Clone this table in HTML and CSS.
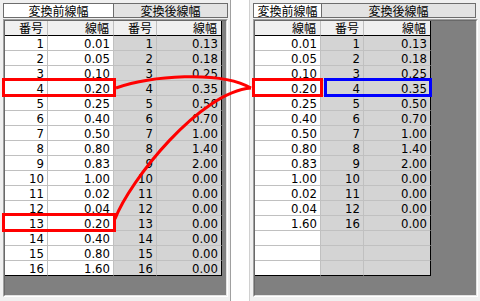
FILE: index.html
```html
<!DOCTYPE html>
<html lang="ja">
<head>
<meta charset="utf-8">
<link rel="stylesheet" href="styles.css">
</head>
<body>
<div class="screen">
  <div class="panel">
    <div class="tabs">
      <div class="tab active tab-l1">変換前線幅</div>
      <div class="tab tab-l2">変換後線幅</div>
    </div>
    <div class="frame">
      <div class="well">
        <div class="grid grid-left">
          <div class="cell head">番号</div><div class="cell head">線幅</div><div class="cell head">番号</div><div class="cell head last">線幅</div>
          <div class="cell">1</div><div class="cell">0.01</div><div class="cell g">1</div><div class="cell g last">0.13</div>
          <div class="cell">2</div><div class="cell">0.05</div><div class="cell g">2</div><div class="cell g last">0.18</div>
          <div class="cell">3</div><div class="cell">0.10</div><div class="cell g">3</div><div class="cell g last">0.25</div>
          <div class="cell">4</div><div class="cell">0.20</div><div class="cell g">4</div><div class="cell g last">0.35</div>
          <div class="cell">5</div><div class="cell">0.25</div><div class="cell g">5</div><div class="cell g last">0.50</div>
          <div class="cell">6</div><div class="cell">0.40</div><div class="cell g">6</div><div class="cell g last">0.70</div>
          <div class="cell">7</div><div class="cell">0.50</div><div class="cell g">7</div><div class="cell g last">1.00</div>
          <div class="cell">8</div><div class="cell">0.80</div><div class="cell g">8</div><div class="cell g last">1.40</div>
          <div class="cell">9</div><div class="cell">0.83</div><div class="cell g">9</div><div class="cell g last">2.00</div>
          <div class="cell">10</div><div class="cell">1.00</div><div class="cell g">10</div><div class="cell g last">0.00</div>
          <div class="cell">11</div><div class="cell">0.02</div><div class="cell g">11</div><div class="cell g last">0.00</div>
          <div class="cell">12</div><div class="cell">0.04</div><div class="cell g">12</div><div class="cell g last">0.00</div>
          <div class="cell">13</div><div class="cell">0.20</div><div class="cell g">13</div><div class="cell g last">0.00</div>
          <div class="cell">14</div><div class="cell">0.40</div><div class="cell g">14</div><div class="cell g last">0.00</div>
          <div class="cell">15</div><div class="cell">0.80</div><div class="cell g">15</div><div class="cell g last">0.00</div>
          <div class="cell bottom">16</div><div class="cell bottom">1.60</div><div class="cell g bottom">16</div><div class="cell g last bottom">0.00</div>
        </div>
      </div>
    </div>
  </div>
  <div class="divider"></div>
  <div class="panel">
    <div class="tabs">
      <div class="tab active tab-r1">変換前線幅</div>
      <div class="tab tab-r2">変換後線幅</div>
    </div>
    <div class="frame">
      <div class="well">
        <div class="grid grid-right">
          <div class="cell head">線幅</div><div class="cell head">番号</div><div class="cell head last">線幅</div>
          <div class="cell">0.01</div><div class="cell g">1</div><div class="cell g last">0.13</div>
          <div class="cell">0.05</div><div class="cell g">2</div><div class="cell g last">0.18</div>
          <div class="cell">0.10</div><div class="cell g">3</div><div class="cell g last">0.25</div>
          <div class="cell">0.20</div><div class="cell g">4</div><div class="cell g last">0.35</div>
          <div class="cell">0.25</div><div class="cell g">5</div><div class="cell g last">0.50</div>
          <div class="cell">0.40</div><div class="cell g">6</div><div class="cell g last">0.70</div>
          <div class="cell">0.50</div><div class="cell g">7</div><div class="cell g last">1.00</div>
          <div class="cell">0.80</div><div class="cell g">8</div><div class="cell g last">1.40</div>
          <div class="cell">0.83</div><div class="cell g">9</div><div class="cell g last">2.00</div>
          <div class="cell">1.00</div><div class="cell g">10</div><div class="cell g last">0.00</div>
          <div class="cell">0.02</div><div class="cell g">11</div><div class="cell g last">0.00</div>
          <div class="cell">0.04</div><div class="cell g">12</div><div class="cell g last">0.00</div>
          <div class="cell">1.60</div><div class="cell g">16</div><div class="cell g last">0.00</div>
          <div class="cell"></div><div class="cell g"></div><div class="cell g last"></div>
          <div class="cell"></div><div class="cell g"></div><div class="cell g last"></div>
          <div class="cell bottom"></div><div class="cell g bottom"></div><div class="cell g last bottom"></div>
        </div>
      </div>
    </div>
  </div>
  <svg class="overlay" width="480" height="301" viewBox="0 0 480 301">
    <g fill="none" stroke="#ff0000" stroke-width="3">
      <rect x="3.5" y="79.5" width="111" height="16"/>
      <rect x="3.5" y="214.5" width="111" height="16"/>
      <rect x="253.5" y="79.5" width="68" height="16"/>
      <path d="M116,88 C150,76 220,70 251,88"/>
      <path d="M115,219 C130,180 200,92 251,88"/>
    </g>
    <rect x="325.5" y="79.5" width="105" height="16" fill="none" stroke="#0000ff" stroke-width="3"/>
  </svg>
</div>
</body>
</html>
```

FILE: styles.css
```css
html, body {
  margin: 0;
  padding: 0;
}
body {
  width: 480px;
  height: 301px;
  overflow: hidden;
  background: #f0f0f0;
  font-family: "Liberation Sans Narrow", "DejaVu Sans Condensed", "Liberation Sans", "Noto Sans CJK JP", sans-serif;
  font-size: 13px;
  color: #000;
}
.screen {
  position: relative;
  display: flex;
  width: 480px;
  height: 301px;
}
.panel {
  width: 230px;
  height: 301px;
  padding: 3px 0 0 3px;
  box-sizing: border-box;
  background: #f0f0f0;
}
.divider {
  width: 20px;
  height: 301px;
  box-sizing: border-box;
  background: #ffffff;
  border-left: 1px solid #a0a0a0;
  border-right: 1px solid #d0d0d0;
}
.tabs {
  display: flex;
  height: 15px;
  margin-bottom: 1px;
}
.tab {
  box-sizing: border-box;
  height: 15px;
  border: 1px solid #6d6d6d;
  background: #e3e3e3;
  font-family: "Noto Sans CJK JP", sans-serif;
  font-size: 12px;
  line-height: 13px;
  text-align: center;
  white-space: nowrap;
}
.tab.active {
  background: #ffffff;
}
.tab-l1 { width: 111px; }
.tab-l2 { width: 114px; border-left: none; }
.tab-r1 { width: 69px; }
.tab-r2 { width: 154px; border-left: none; }
.frame {
  width: 225px;
  height: 278px;
  box-sizing: border-box;
  border: 1px solid;
  border-color: #a0a0a0 #ffffff #ffffff #a0a0a0;
}
.well {
  width: 100%;
  height: 100%;
  box-sizing: border-box;
  border: 1px solid;
  border-color: #696969 #e3e3e3 #e3e3e3 #696969;
  background: #808080;
}
.grid {
  display: grid;
  grid-auto-rows: 15px;
}
.grid-left {
  grid-template-columns: 43px 66px 43px 65px;
}
.grid-right {
  grid-template-columns: 66px 43px 67px;
}
.cell {
  box-sizing: border-box;
  height: 15px;
  border-right: 1px solid #c0c0c0;
  border-bottom: 1px solid #c0c0c0;
  background: #ffffff;
  text-align: right;
  padding-right: 3px;
  line-height: 15px;
  white-space: nowrap;
}
.cell.g {
  background: #d4d4d4;
}
.cell.head {
  background: #f0f0f0;
  border-bottom: 1px solid #000000;
  font-family: "Noto Sans CJK JP", sans-serif;
  font-size: 12px;
  line-height: 14px;
  padding-right: 4px;
}
.cell.last {
  border-right: 1px solid #000000;
}
.cell.bottom {
  border-bottom: 1px solid #000000;
}
.overlay {
  position: absolute;
  left: 0;
  top: 0;
  pointer-events: none;
}
```
